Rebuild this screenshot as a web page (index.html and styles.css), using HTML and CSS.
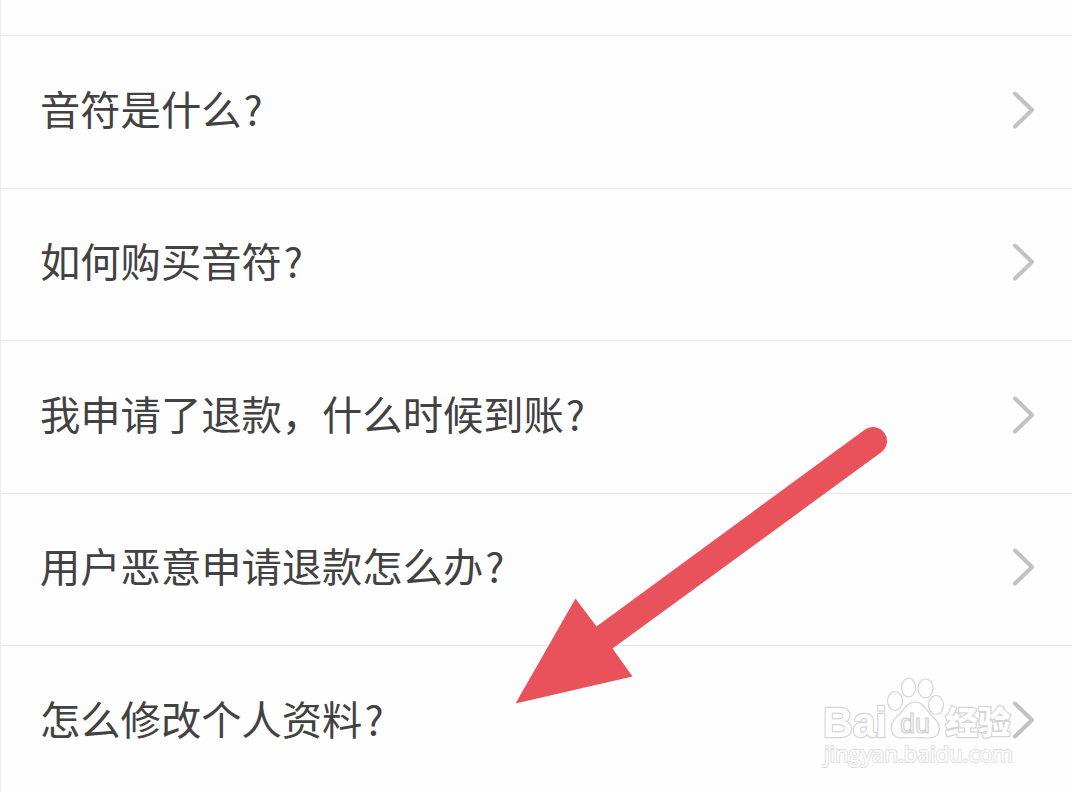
FILE: index.html
```html
<!DOCTYPE html>
<html lang="zh-CN">
<head>
    <meta charset="UTF-8">
    <meta name="viewport" content="width=device-width, initial-scale=1.0">
    <title>常见问题</title>
    <link rel="stylesheet" href="styles.css">
</head>
<body>
    <main class="page">
        <ul class="faq-list">
            <li class="faq-item">
                <span class="question">音符是什么<span class="mark">?</span></span>
                <svg class="chevron" viewBox="0 0 24 40"><path d="M3 3.5 20 20 3 36.5"/></svg>
            </li>
            <li class="faq-item">
                <span class="question">如何购买音符<span class="mark">?</span></span>
                <svg class="chevron" viewBox="0 0 24 40"><path d="M3 3.5 20 20 3 36.5"/></svg>
            </li>
            <li class="faq-item">
                <span class="question">我申请了退款，什么时候到账<span class="mark">?</span></span>
                <svg class="chevron" viewBox="0 0 24 40"><path d="M3 3.5 20 20 3 36.5"/></svg>
            </li>
            <li class="faq-item">
                <span class="question">用户恶意申请退款怎么办<span class="mark">?</span></span>
                <svg class="chevron" viewBox="0 0 24 40"><path d="M3 3.5 20 20 3 36.5"/></svg>
            </li>
            <li class="faq-item">
                <span class="question">怎么修改个人资料<span class="mark">?</span></span>
                <svg class="chevron" viewBox="0 0 24 40"><path d="M3 3.5 20 20 3 36.5"/></svg>
            </li>
        </ul>

        <!-- arrow pointing at the last question -->
        <svg class="arrow" viewBox="0 0 372 276">
            <path d="M0.5 275.5 60.5 170.5 81.5 198.500 349.700 1.700A14 14 0 0 1 366.300 24.300L97.500 220.500 117.500 248.500Z"/>
        </svg>

        <svg class="watermark" viewBox="0 0 200 100">
            <g class="wm-text">
                <text class="wm-bai" x="2" y="66.500" textLength="64" lengthAdjust="spacingAndGlyphs">Bai</text>
                <text class="wm-cn" x="124.500" y="63.500" textLength="65" lengthAdjust="spacingAndGlyphs">经验</text>
                <text class="wm-url" x="3" y="92" textLength="189" lengthAdjust="spacingAndGlyphs">jingyan.baidu.com</text>
            </g>
            <g class="wm-paw">
                <ellipse cx="74" cy="31" rx="7.500" ry="9.500"/>
                <ellipse cx="87.500" cy="17.500" rx="7" ry="9.500"/>
                <ellipse cx="104.500" cy="18.500" rx="7.500" ry="9.500"/>
                <ellipse cx="115" cy="35" rx="7.500" ry="9.500"/>
                <path d="M94.500 32C86 32 84 39 77 45.500C70 51.500 68.500 57 71.500 63C75 70 84 67.500 94.500 67.500C105 67.500 113 70 117 64C120 58 117.500 51.500 111.500 46.500C104.500 40 102.500 32 94.500 32Z"/>
            </g>
            <text class="wm-du" x="79" y="62.500" textLength="30" lengthAdjust="spacingAndGlyphs">du</text>
        </svg>
    </main>
</body>
</html>
```

FILE: styles.css
```css
body {
    margin: 0;
    background: #fefefe;
    color: #424242;
    font-family: "Noto Sans CJK SC", sans-serif;
}
.page {
    position: relative;
    box-sizing: border-box;
    height: 792px;
    padding-top: 35px;
    border-left: 1px solid #ececec;
    overflow: hidden;
}
.faq-list {
    margin: 0;
    padding: 0;
    list-style: none;
}
.faq-item {
    display: flex;
    align-items: center;
    justify-content: space-between;
    box-sizing: border-box;
    height: 152.5px;
    padding: 0 36px 4px 39px;
    border-top: 1px solid #e8e8e8;
}
.question {
    padding-bottom: 4px;
    font-size: 40.3px;
    line-height: 60px;
    white-space: nowrap;
}
.mark {
    margin-left: 2px;
}
.chevron {
    width: 24px;
    height: 40px;
    fill: none;
    stroke: #c2c2c2;
    stroke-width: 4;
    stroke-linecap: round;
    stroke-linejoin: round;
}
.arrow {
    position: absolute;
    left: 514px;
    top: 428px;
    width: 372px;
    height: 276px;
    fill: #e9515b;
    overflow: visible;
}
.watermark {
    position: absolute;
    left: 820px;
    top: 670px;
    width: 200px;
    height: 100px;
    fill: #fff;
    stroke: #d4d4d4;
    stroke-width: 1.2;
}
.wm-text {
    paint-order: stroke;
    stroke-width: 2.4;
    stroke-linejoin: round;
}
.wm-bai {
    font: bold 43px "Liberation Sans", sans-serif;
}
.wm-cn {
    font: 900 32px "Noto Sans CJK SC", sans-serif;
}
.wm-url {
    font: 22px "Open Sans", sans-serif;
    stroke: #dedede;
    stroke-width: 2;
}
.wm-du {
    font: 28px "Liberation Sans", sans-serif;
    stroke: #cfcfcf;
}
```
